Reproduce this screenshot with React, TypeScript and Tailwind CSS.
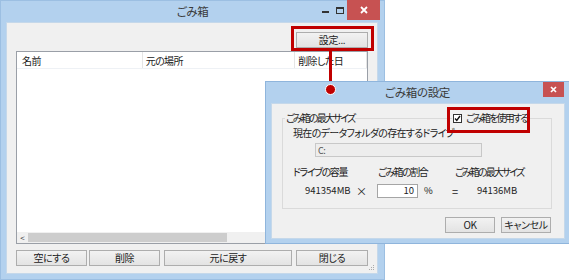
import React from "react";

const font = "font-['Noto_Sans_CJK_JP',sans-serif] [font-feature-settings:'palt']";

function Btn({ children, className = "" }: { children: React.ReactNode; className?: string }) {
  return (
    <div
      className={`flex items-center justify-center h-[16px] border border-[#adadad] bg-gradient-to-b from-[#f2f2f2] to-[#e3e3e3] text-[10px] leading-none text-[#222] tracking-[-0.4px] ${className}`}
    >
      {children}
    </div>
  );
}

function MainWindow() {
  return (
    <div className="absolute left-0 top-0 w-[385px] h-[280px] bg-[#b3d1ee] border border-[#9cbfe2] flex flex-col">
      {/* title bar */}
      <div className="relative h-[21px] flex items-center justify-center">
        <span className="text-[11.5px] text-[#3a3a3a] tracking-[-0.3px] leading-none mt-[1px]">ごみ箱</span>
        <div className="absolute right-[4px] top-[-1px] flex items-start">
          <div className="w-[16px] h-[20px] flex items-center justify-center">
            <div className="w-[7px] h-[2px] bg-[#333] mt-[3px]" />
          </div>
          <div className="w-[14px] h-[20px] flex items-center justify-center">
            <div className="w-[8px] h-[7px] border border-[#333] border-t-2" />
          </div>
          <div className="w-[33px] h-[20px] bg-[#c75252] flex items-center justify-center">
            <svg width="8" height="8" viewBox="0 0 8 8">
              <path d="M1 1 L7 7 M7 1 L1 7" stroke="#fff" strokeWidth="1.8" />
            </svg>
          </div>
        </div>
      </div>
      {/* client */}
      <div className="ml-[5px] mr-[6px] h-[252px] bg-[#f0f0f0] border border-[#c5d8ea] flex flex-col relative">
        <div className="flex justify-end pt-[9px] pr-[9px]">
          <Btn className="w-[72px] h-[16px]">設定...</Btn>
        </div>
        {/* list */}
        <div className="mt-[3px] mx-[9px] h-[193px] border border-[#9a9fa7] bg-white flex flex-col">
          <div className="h-[17px] flex items-center text-[10px] text-[#222] tracking-[-0.6px] border-b border-[#eef1f5]">
            <div className="w-[126px] h-full flex items-center pl-[5px] border-r border-[#e5e5e5]">名前</div>
            <div className="w-[153px] h-full flex items-center pl-[3px] border-r border-[#e5e5e5]">元の場所</div>
            <div className="w-[72px] h-full flex items-center pl-[3px] border-r border-[#e5e5e5]">削除した日</div>
          </div>
          <div className="flex-1" />
          <div className="h-[11px] bg-[#f0f0f0] flex items-center">
            <div className="w-[11px] flex items-center justify-center text-[8px] text-[#333] leading-none">&lt;</div>
            <div className="w-[199px] h-[9px] bg-[#cdcdcd]" />
          </div>
        </div>
        {/* buttons */}
        <div className="mt-[6px] ml-[9px] flex">
          <Btn className="w-[71px]">空にする</Btn>
          <Btn className="w-[71px] ml-[2px]">削除</Btn>
          <Btn className="w-[128px] ml-[4px]">元に戻す</Btn>
          <Btn className="w-[72px] ml-[4px]">閉じる</Btn>
        </div>
        <div className="absolute right-[2px] bottom-[2px]">
          <svg width="6" height="6" viewBox="0 0 6 6">
            <rect x="4" y="0" width="1" height="1" fill="#aaa" />
            <rect x="2" y="2" width="1" height="1" fill="#aaa" />
            <rect x="4" y="2" width="1" height="1" fill="#aaa" />
            <rect x="0" y="4" width="1" height="1" fill="#aaa" />
            <rect x="2" y="4" width="1" height="1" fill="#aaa" />
            <rect x="4" y="4" width="1" height="1" fill="#aaa" />
          </svg>
        </div>
      </div>
    </div>
  );
}

function SettingsDialog() {
  return (
    <div className="absolute left-[265px] top-[81px] w-[305px] h-[163px] bg-[#b3d1ee] border border-[#8fb5dc] flex flex-col">
      <div className="relative h-[21px] flex items-center justify-center">
        <span className="text-[11.5px] text-[#3a3a3a] tracking-[-0.3px] leading-none mt-[1px]">ごみ箱の設定</span>
        <div className="absolute left-[277px] top-0 w-[21px] h-[15px] bg-[#c75252] flex items-center justify-center">
          <svg width="7" height="7" viewBox="0 0 7 7">
            <path d="M1 1 L6 6 M6 1 L1 6" stroke="#fff" strokeWidth="1.7" />
          </svg>
        </div>
      </div>
      <div className="ml-[5px] mr-[4px] h-[136px] bg-[#f0f0f0] border border-[#c5d8ea] flex flex-col">
        {/* group box */}
        <div className="mt-[14px] ml-[10px] mr-[12px] h-[91px] border border-[#dadada] flex flex-col text-[10px] text-[#222] tracking-[-0.4px]">
          <div className="-mt-[7px] h-[12px] flex items-center leading-none">
            <div className="w-[169px] flex">
              <span className="ml-[2px] px-[1px] bg-[#f0f0f0] tracking-[-1.9px]">ごみ箱の最大サイズ</span>
            </div>
            <span className="pl-[1px] pr-[2px] bg-[#f0f0f0] flex items-center">
              <span className="w-[9px] h-[9px] border border-[#333] bg-white flex items-center justify-center mr-[4px]">
                <svg width="7" height="7" viewBox="0 0 7 7">
                  <path d="M1 3.5 L2.8 5.5 L6 1" stroke="#111" strokeWidth="1.4" fill="none" />
                </svg>
              </span>
              <span className="tracking-[-1.8px]">ごみ箱を使用する</span>
            </span>
          </div>
          <div className="mt-[3px] ml-[10px] leading-[12px] tracking-[-0.7px]">現在のデータフォルダの存在するドライブ</div>
          <div className="mt-[4px] ml-[32px] w-[167px] h-[14px] border border-[#c8c8c8] bg-[#ededed] flex items-center pl-[2px] text-[9px] leading-none text-[#555]">
            C:
          </div>
          <div className="mt-[9px] ml-[10px] flex leading-[12px]">
            <span className="w-[85px] tracking-[-1.4px]">ドライブの容量</span>
            <span className="w-[77px] tracking-[-1.5px]">ごみ箱の割合</span>
            <span className="tracking-[-1.9px]">ごみ箱の最大サイズ</span>
          </div>
          <div className="mt-[6px] ml-[22px] flex items-center text-[9.5px] leading-none">
            <span className="w-[51px] tracking-[0px]">941354MB</span>
            <span className="w-[21px] text-[11px]">×</span>
            <span className="w-[41px] h-[14px] border border-[#a5a5a5] bg-white flex items-center justify-end pr-[3px] tracking-[0px]">10</span>
            <span className="ml-[6px] w-[28px]">%</span>
            <span className="w-[25px] text-[11px]">=</span>
            <span className="tracking-[0px]">94136MB</span>
          </div>
        </div>
        <div className="mt-[8px] ml-[173px] flex">
          <Btn className="w-[50px] h-[16px] border-[#7eb4ea]">OK</Btn>
          <Btn className="w-[50px] h-[16px] ml-[6px]">キャンセル</Btn>
        </div>
      </div>
    </div>
  );
}

export default function App() {
  return (
    <div className={`relative w-[569px] h-[280px] bg-white overflow-hidden ${font}`}>
      <MainWindow />
      {/* callout connector */}
      <div className="absolute left-[329px] top-[49px] w-[3px] h-[40px] bg-[#c00000]" />
      <div className="absolute left-[291px] top-[26px] w-[83px] h-[25px] border-[3px] border-[#c00000]" />
      <SettingsDialog />
      <div className="absolute left-[325px] top-[84px] w-[11px] h-[11px] rounded-full bg-[#c00000] border-[1.5px] border-white" />
      <div className="absolute left-[447px] top-[107px] w-[83px] h-[26px] border-[3px] border-[#c00000]" />
    </div>
  );
}
